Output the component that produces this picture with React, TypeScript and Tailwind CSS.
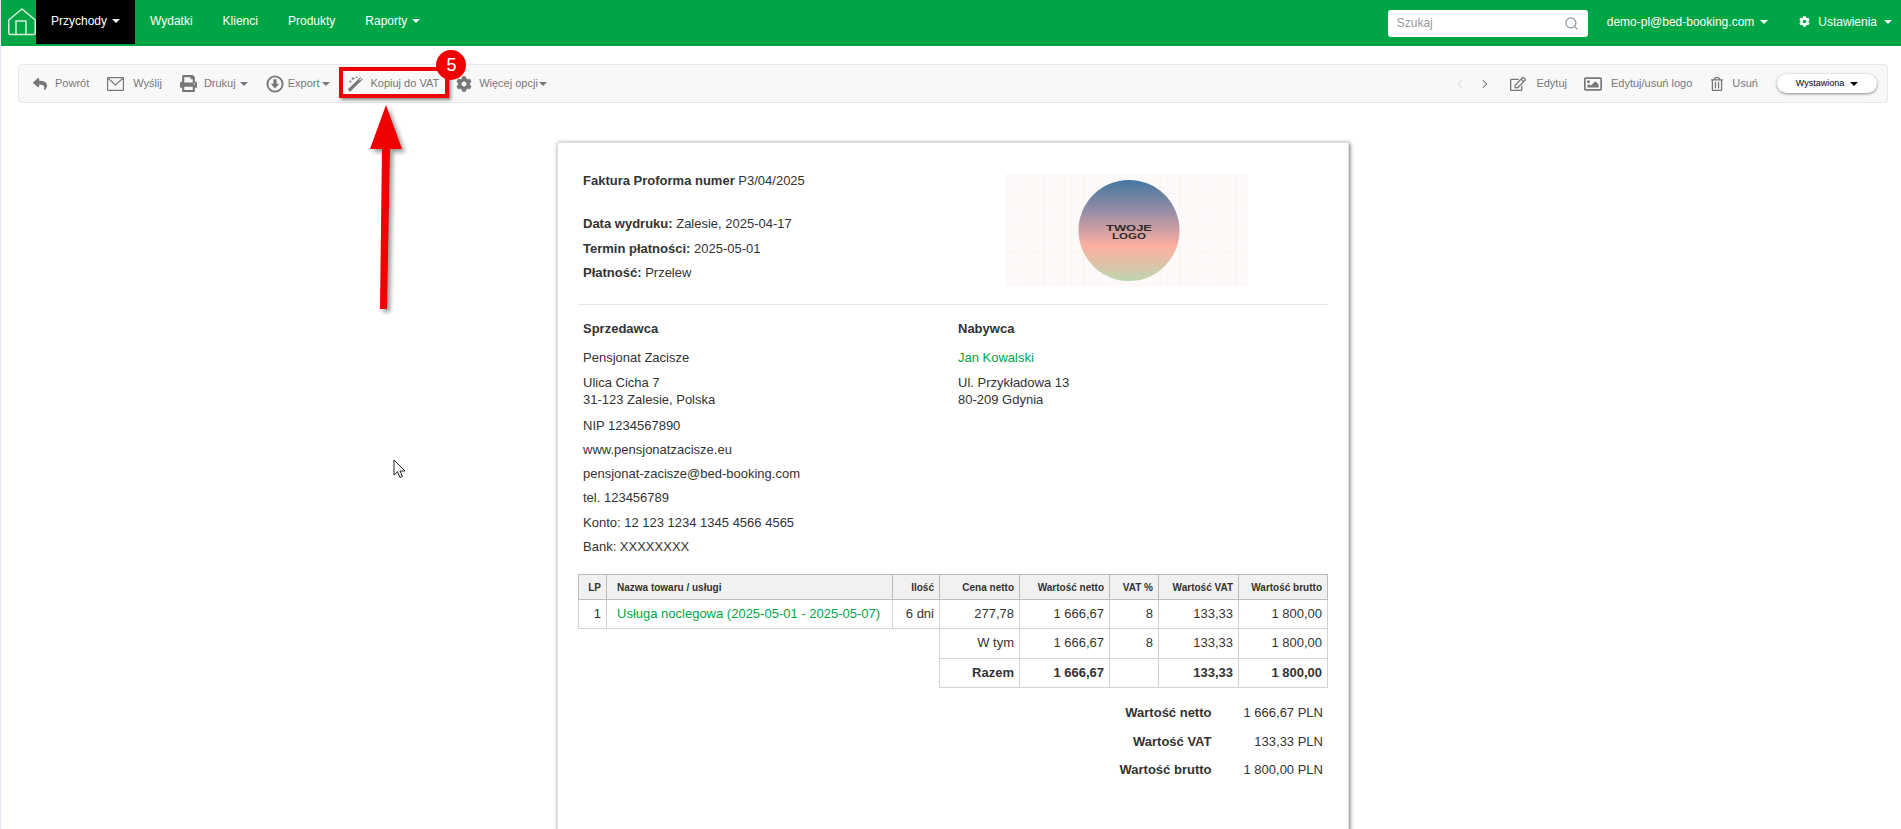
import React from "react";
import { FaReply, FaPrint, FaCog, FaRegEdit, FaRegTrashAlt, FaRegImage } from "react-icons/fa";
import { Search, ChevronLeft, ChevronRight } from "lucide-react";

const Caret = ({ cls = "border-t-white" }: { cls?: string }) => (
  <span className={`inline-block w-0 h-0 border-t-[4px] border-x-[4px] border-x-transparent ${cls}`} />
);

const NavItem = ({ label, caret, active }: { label: string; caret?: boolean; active?: boolean }) => (
  <a className={`flex items-center gap-[5px] px-[15px] h-[44px] pb-[2px] text-[12px] text-white ${active ? "bg-black" : ""}`}>
    {label}
    {caret && <Caret />}
  </a>
);

const Home = () => (
  <svg width="28" height="28" viewBox="0 0 28 28" fill="none" stroke="#d4f0dd" strokeWidth="1.5" className="ml-[7px] mt-[8px] shrink-0">
    <path d="M.75 12 14 1l13.25 11v13a1.5 1.5 0 0 1-1.5 1.5H2.25A1.5 1.5 0 0 1 .75 25z" />
    <path d="M8 26.5V13h10v13.5" />
  </svg>
);

const Mail = () => (
  <svg width="17" height="14" viewBox="0 0 17 14" fill="none" stroke="#777" strokeWidth="1.2">
    <rect x=".6" y=".6" width="15.8" height="12.8" rx=".5" />
    <path d="M.8 1 8.5 8l7.7-7" />
  </svg>
);

const ExportIcon = () => (
  <svg width="18" height="18" viewBox="0 0 18 18">
    <circle cx="9" cy="9" r="7.6" fill="none" stroke="#777" strokeWidth="1.9" />
    <path d="M7.4 4.2h3.2v4.6h2.6L9 13.6 4.8 8.8h2.6z" fill="#777" />
  </svg>
);

const Wand = () => (
  <svg width="16" height="16" viewBox="0 0 16 16">
    <path d="M1 14.5 11.4 4.4" stroke="#777" strokeWidth="3.2" fill="none" />
    <path d="M11 4.8 13.4 2.4" stroke="#777" strokeWidth="3.4" fill="none" />
    <path d="M11.6 4.2 13.2 2.6" stroke="#f8f8f8" strokeWidth="1.3" fill="none" />
    <path d="M5 1v3.2M3.4 2.6h3.2M1.4 5.6h2M2.4 4.6v2M8.6.6v1.6M7.8 1.4h1.6" stroke="#777" strokeWidth=".9" fill="none" />
  </svg>
);

const Logo = () => (
  <svg width="242" height="113" viewBox="0 0 242 113" className="block">
    <defs>
      <pattern id="fine" width="6.4" height="6.4" patternUnits="userSpaceOnUse">
        <path d="M6.4 0H0V6.4" fill="none" stroke="#f8f2ef" strokeWidth="0.7" />
      </pattern>
      <pattern id="big" width="19.2" height="19.2" patternUnits="userSpaceOnUse">
        <path d="M19.2 0H0V19.2" fill="none" stroke="#f6eeeb" strokeWidth="0.8" />
      </pattern>
      <linearGradient id="g" x1="0" y1="0" x2="0" y2="1">
        <stop offset="0" stopColor="#44779f" />
        <stop offset="0.32" stopColor="#998ea6" />
        <stop offset="0.66" stopColor="#ffb0a1" />
        <stop offset="1" stopColor="#bcd5b0" />
      </linearGradient>
    </defs>
    <rect width="242" height="113" fill="#fdfbfa" />
    <rect width="242" height="113" fill="url(#fine)" />
    <rect width="242" height="113" fill="url(#big)" />
    <circle cx="123" cy="56.5" r="50.5" fill="url(#g)" />
    <text x="100" y="57" textLength="46" lengthAdjust="spacingAndGlyphs" fontFamily="Liberation Sans" fontWeight="bold" fontSize="8.5" fill="#2b2b2b">TWOJE</text>
    <text x="106" y="65" textLength="34" lengthAdjust="spacingAndGlyphs" fontFamily="Liberation Sans" fontWeight="bold" fontSize="8.5" fill="#2b2b2b">LOGO</text>
  </svg>
);

const th = "border border-[#bcbcbc] bg-[#f1f1f1] px-[5px] text-[10px] font-bold text-right text-[#333]";
const td = "border border-[#d4d4d4] px-[5px] pb-[1px] text-[13px] text-right";

export default function App() {
  return (
    <div className="relative h-screen overflow-hidden bg-white border-l border-[#dfe9f5] font-['Liberation_Sans',Arial,sans-serif] text-[13px] text-[#333]">
      <header className="h-[46px] bg-[#00a546] flex">
        <Home />
        <nav className="flex">
          <NavItem label="Przychody" caret active />
          <NavItem label="Wydatki" />
          <NavItem label="Klienci" />
          <NavItem label="Produkty" />
          <NavItem label="Raporty" caret />
        </nav>
        <div className="ml-auto flex items-center pr-[9px] text-[12px] text-white pb-[3px]">
          <div className="flex items-center justify-between w-[200px] h-[27px] bg-white rounded-[3px] px-[9px] mt-[3px] text-[#999]">
            <span>Szukaj</span>
            <Search size={15} className="text-[#8a97a3]" />
          </div>
          <span className="ml-[19px]">demo-pl@bed-booking.com</span>
          <span className="ml-[6px] flex"><Caret /></span>
          <FaCog size={11} className="ml-[31px]" />
          <span className="ml-[8px]">Ustawienia</span>
          <span className="ml-[7px] flex"><Caret /></span>
        </div>
      </header>

      <div className="mt-[18px] ml-[17px] mr-[13px] h-[39px] bg-[#f8f8f8] border border-[#e7e7e7] rounded-[4px] flex items-center pl-[14px] pr-[10px] text-[11px] text-[#777]">
        <span className="flex items-center gap-[8px]"><FaReply size={14} />Powrót</span>
        <span className="ml-[18px] flex items-center gap-[9px]"><Mail />Wyślij</span>
        <span className="ml-[18px] flex items-center gap-[7px]"><FaPrint size={17} />Drukuj<span className="flex ml-[-3px]"><Caret cls="border-t-[#777]" /></span></span>
        <span className="ml-[18px] flex items-center gap-[4px]"><ExportIcon />Export<span className="ml-[-1px] flex"><Caret cls="border-t-[#777]" /></span></span>
        <span className="relative ml-[18px] flex items-center gap-[6px]">
          <Wand />Kopiuj do VAT
          <span className="absolute left-[-9px] right-[-10px] top-[-8px] bottom-[-6px] border-[4px] border-[#f00000] shadow-[2px_2px_3px_rgba(0,0,0,0.45)]" />
          <span className="absolute left-[88px] top-[-25px] w-[30px] h-[30px] rounded-full bg-[#f00000] flex items-center justify-center text-white text-[18px]">5</span>
        </span>
        <span className="ml-[17px] flex items-center gap-[7px]"><FaCog size={16} />Więcej opcji<span className="flex ml-[-6px]"><Caret cls="border-t-[#777]" /></span></span>

        <div className="ml-auto flex items-center">
          <ChevronLeft size={14} strokeWidth={1.5} className="text-[#c8c8c8]" />
          <ChevronRight size={14} strokeWidth={1.8} className="ml-[11px] text-[#666]" />
          <span className="ml-[18px] flex items-center gap-[10px]"><FaRegEdit size={16} />Edytuj</span>
          <span className="ml-[17px] flex items-center gap-[9px]"><FaRegImage size={18} />Edytuj/usuń logo</span>
          <span className="ml-[18px] flex items-center gap-[8px]"><FaRegTrashAlt size={14} />Usuń</span>
          <div className="ml-[19px] flex items-center justify-center gap-[6px] w-[100px] h-[19px] rounded-full bg-white shadow-[0_1px_3px_rgba(0,0,0,0.45)] text-[9px] text-black">
            Wystawiona<Caret cls="border-t-black" />
          </div>
        </div>
      </div>

      <main className="ml-[556px] mt-[39px] w-[792px] h-[800px] bg-white border border-[#dedede] rounded-[2px] shadow-[1px_1px_4px_rgba(0,0,0,0.55)] px-[20px]">
        <section className="flex items-start border-b border-[#e8e8e8] h-[162px]">
          <div className="pl-[5px] pt-[30px] flex flex-col">
            <p className="leading-[15px]"><b>Faktura Proforma numer</b> P3/04/2025</p>
            <p className="leading-[15px] mt-[28px]"><b>Data wydruku:</b> Zalesie, 2025-04-17</p>
            <p className="leading-[15px] mt-[10px]"><b>Termin płatności:</b> 2025-05-01</p>
            <p className="leading-[15px] mt-[9px]"><b>Płatność:</b> Przelew</p>
          </div>
          <div className="ml-auto mr-[80px] mt-[31px]"><Logo /></div>
        </section>

        <section className="flex pl-[5px] pt-[16px] h-[269px]">
          <div className="w-[375px] flex flex-col gap-[9.3px] leading-[15px]">
            <b className="mb-[4.7px]">Sprzedawca</b>
            <p>Pensjonat Zacisze</p>
            <p className="leading-[17px]">Ulica Cicha 7<br />31-123 Zalesie, Polska</p>
            <p>NIP 1234567890</p>
            <p>www.pensjonatzacisze.eu</p>
            <p>pensjonat-zacisze@bed-booking.com</p>
            <p>tel. 123456789</p>
            <p>Konto: 12 123 1234 1345 4566 4565</p>
            <p>Bank: XXXXXXXX</p>
          </div>
          <div className="flex flex-col gap-[9.3px] leading-[15px]">
            <b className="mb-[4.7px]">Nabywca</b>
            <p className="text-[#00a546]">Jan Kowalski</p>
            <p className="leading-[17px]">Ul. Przykładowa 13<br />80-209 Gdynia</p>
          </div>
        </section>

        <table className="table-fixed border-collapse w-[750px]">
          <colgroup>
            <col className="w-[28px]" />
            <col className="w-[286px]" />
            <col className="w-[47px]" />
            <col className="w-[80px]" />
            <col className="w-[90px]" />
            <col className="w-[49px]" />
            <col className="w-[80px]" />
            <col className="w-[89px]" />
          </colgroup>
          <thead>
            <tr className="h-[25px]">
              <th className={th}>LP</th>
              <th className="border border-[#bcbcbc] bg-[#f1f1f1] pl-[10px] text-[10px] font-bold text-left">Nazwa towaru / usługi</th>
              <th className={th}>Ilość</th>
              <th className={th}>Cena netto</th>
              <th className={th}>Wartość netto</th>
              <th className={th}>VAT %</th>
              <th className={th}>Wartość VAT</th>
              <th className={th}>Wartość brutto</th>
            </tr>
          </thead>
          <tbody>
            <tr className="h-[29px]">
              <td className={td}>1</td>
              <td className="border border-[#d4d4d4] pl-[10px] pb-[1px] text-[#00a546] whitespace-nowrap">Usługa noclegowa (2025-05-01 - 2025-05-07)</td>
              <td className={td}>6 dni</td>
              <td className={td}>277,78</td>
              <td className={td}>1 666,67</td>
              <td className={td}>8</td>
              <td className={td}>133,33</td>
              <td className={td}>1 800,00</td>
            </tr>
            <tr className="h-[30px]">
              <td colSpan={3} />
              <td className={td}>W tym</td>
              <td className={td}>1 666,67</td>
              <td className={td}>8</td>
              <td className={td}>133,33</td>
              <td className={td}>1 800,00</td>
            </tr>
            <tr className="h-[29px]">
              <td colSpan={3} />
              <td className={`${td} font-bold`}>Razem</td>
              <td className={`${td} font-bold`}>1 666,67</td>
              <td className={td}></td>
              <td className={`${td} font-bold`}>133,33</td>
              <td className={`${td} font-bold`}>1 800,00</td>
            </tr>
          </tbody>
        </table>

        <div className="mt-[17px] mr-[5px] grid grid-cols-[auto_auto] justify-end gap-x-[32px] gap-y-[13.5px] text-right leading-[15px]">
          <b>Wartość netto</b><span>1 666,67 PLN</span>
          <b>Wartość VAT</b><span>133,33 PLN</span>
          <b>Wartość brutto</b><span>1 800,00 PLN</span>
        </div>
      </main>

      {/* annotation arrow */}
      <svg width="60" height="220" viewBox="0 0 60 220" className="absolute left-[360px] top-[100px] pointer-events-none">
        <path d="M25 5 41 49H29L26 209H19L21 49H9Z" fill="#f00000" className="drop-shadow-[3px_3px_2px_rgba(0,0,0,0.4)]" />
      </svg>
      {/* mouse pointer */}
      <svg width="14" height="21" viewBox="0 0 14 21" className="absolute left-[392px] top-[459px] pointer-events-none">
        <path d="M1 1V16L4.5 12.8 7 18.5 9.5 17.5 7 12H12Z" fill="#fff" stroke="#222" strokeWidth="1" />
      </svg>
    </div>
  );
}
